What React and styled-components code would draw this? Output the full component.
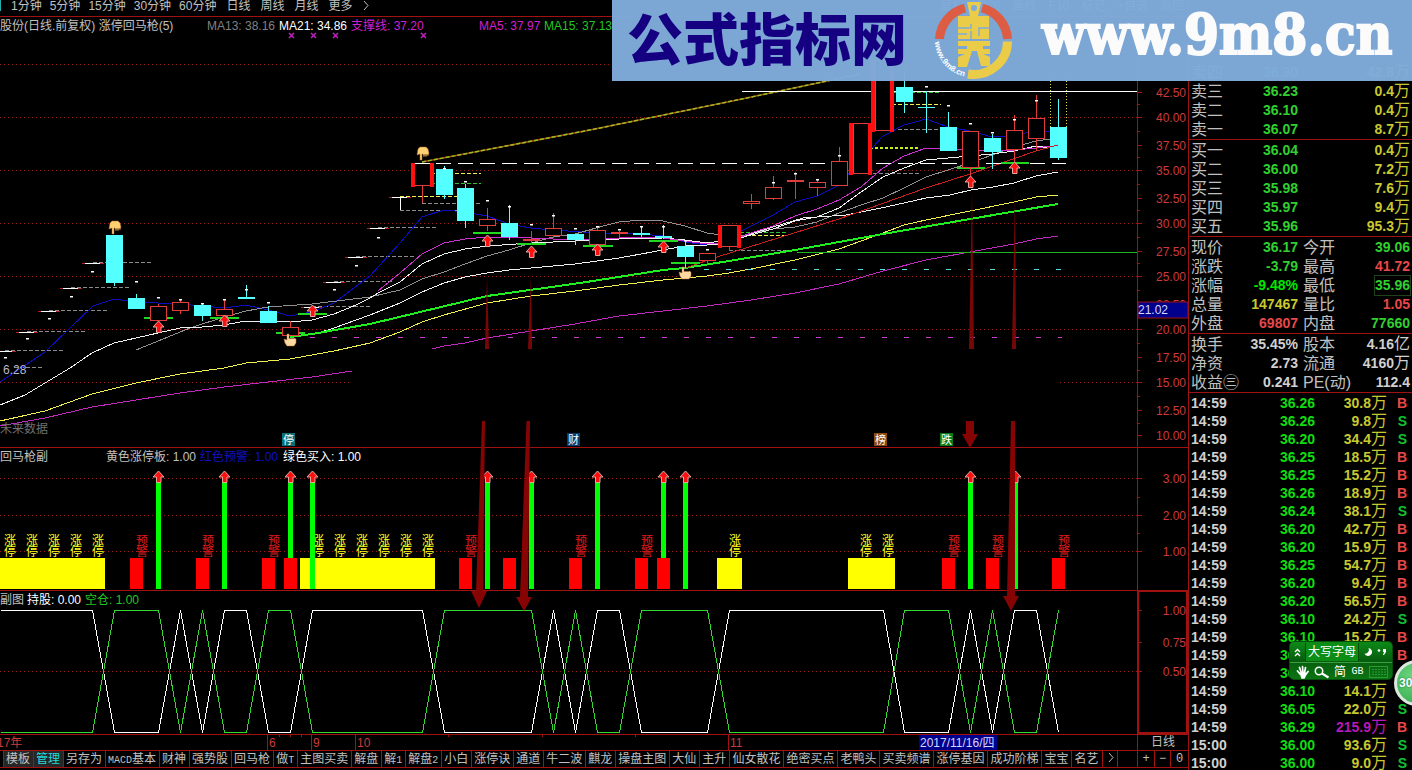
import React from "react";
import styled, { createGlobalStyle } from "styled-components";

const RED_LINE = "#a01212";
const GRID = "#a01818";
const CYAN = "#54ffff";
const SANS = `"Liberation Sans", "Noto Sans CJK SC", sans-serif`;

const GlobalStyle = createGlobalStyle`
  * { box-sizing: border-box; }
  body { margin: 0; background: #000; overflow: hidden; }
  button { font: inherit; color: inherit; background: none; border: 0; padding: 0; margin: 0; white-space: nowrap; }
`;

const Screen = styled.div`
  position: relative;
  display: grid;
  grid-template-columns: minmax(0, 1fr) 224px;
  height: 100vh;
  overflow: hidden;
  background: #000;
  color: #c0c0c0;
  font: 12px/16px ${SANS};
`;
const Main = styled.main`
  position: relative;
  display: flex;
  flex-direction: column;
  min-width: 0;
`;
const PeriodBar = styled.nav`
  display: flex;
  align-items: flex-start;
  gap: 10px;
  height: 17px;
  line-height: 12px;
  border-bottom: 1px solid ${RED_LINE};
  overflow: hidden;
  &::before { content: ""; flex: none; width: 1px; height: 11px; background: #20b0b0; }
`;
const Minutes = styled.div`
  display: flex;
  gap: 8px;
`;
const Tools = styled.div`
  display: flex;
  gap: 12px;
  margin-left: 562px;
`;
const Panel = styled.section`
  display: grid;
  grid-template-columns: minmax(0, 1fr) 51px;
  border-bottom: 1px solid ${RED_LINE};
`;
const Plot = styled.div`
  min-width: 0;
`;
const PlotTitle = styled.header`
  display: flex;
  height: 17px;
  line-height: 19px;
  white-space: nowrap;
`;
const Legend = styled.span`
  flex: none;
  width: ${(p) => p.$w}px;
  color: ${(p) => p.$c || "#c0c0c0"};
`;
const Drawing = styled.svg`
  display: block;
  width: 100%;
  height: ${(p) => p.$h}px;
  overflow: ${(p) => (p.$open ? "visible" : "hidden")};
  font-family: ${SANS};
  font-size: 12px;
`;
const Axis = styled.div`
  border-left: 1px solid ${RED_LINE};
  ${(p) => p.$active && `border: 2px solid ${RED_LINE}; margin-top: -1px;`}
`;
const TimeRow = styled.div`
  display: grid;
  grid-template-columns: minmax(0, 1fr) 51px;
  height: 16px;
  border-bottom: 1px solid ${RED_LINE};
`;
const PeriodCell = styled.div`
  border-left: 1px solid ${RED_LINE};
  text-align: center;
  line-height: 15px;
`;
const TabRow = styled.nav`
  display: flex;
  height: 17px;
  line-height: 16px;
  border-bottom: 1px solid ${RED_LINE};
  overflow: hidden;
`;
const Tab = styled.button`
  flex: none;
  height: 16px;
  line-height: 16px;
  padding: 0 3px 0 2px;
  border-right: 1px solid ${RED_LINE};
  color: ${(p) => (p.$active ? "#20dcdc" : "#c0c0c0")};
  background: ${(p) => (p.$raised ? "#262626" : "transparent")};
`;
const TabEdge = styled.span`
  flex: none;
  width: 4px;
  border-right: 1px solid ${RED_LINE};
`;
const Latin = styled.span`
  font: 10px/16px "Liberation Mono", monospace;
`;
const ZoomKeys = styled.div`
  display: grid;
  grid-template-columns: 16px 16px 1fr;
  flex: none;
  width: 51px;
  margin-left: auto;
  border-left: 1px solid ${RED_LINE};
`;
const ZoomKey = styled.button`
  text-align: center;
  font-family: "Liberation Mono", monospace;
  & + & { border-left: 1px solid ${RED_LINE}; }
`;
const ArrowLayer = styled.svg`
  position: absolute;
  inset: 0;
  width: 100%;
  height: 100%;
  pointer-events: none;
`;

const Side = styled.aside`
  border-left: 1px solid ${RED_LINE};
  padding-top: 62px;
  overflow: hidden;
`;
const Block = styled.div`
  padding: 1px 2px 0;
  border-bottom: 1px solid ${RED_LINE};
`;
const Quote = styled.div`
  display: grid;
  grid-template-columns: 107px 1fr;
  column-gap: 5px;
  height: 19px;
  line-height: 19px;
`;
const Field = styled.div`
  display: flex;
  justify-content: space-between;
  white-space: nowrap;
`;
const Name = styled.span`
  font-size: 16px;
`;
const Num = styled.span`
  margin-left: auto;
  font-size: 14px;
  font-weight: bold;
  color: ${(p) => p.$c};
  outline: ${(p) => (p.$boxed ? "1px solid #204020" : "none")};
`;
const Unit = styled.span`
  font-size: 16px;
  font-weight: normal;
  line-height: 16px;
`;
const Ticks = styled.table`
  width: 221px;
  margin-top: 1px;
  border-collapse: collapse;
  table-layout: fixed;
  font-size: 14px;
  font-weight: bold;
`;
const Cell = styled.td`
  height: 18px;
  padding: 0;
  line-height: 18px;
  text-align: ${(p) => (p.$left ? "left" : "right")};
  padding-left: ${(p) => (p.$left ? 2 : 0)}px;
  padding-right: ${(p) => (p.$end ? 3 : 0)}px;
  color: ${(p) => p.$c};
  white-space: nowrap;
`;

const Banner = styled.a`
  position: absolute;
  top: 0;
  right: 0;
  display: flex;
  align-items: flex-start;
  width: 800px;
  height: 81px;
  padding-left: 15px;
  background: rgba(127, 171, 218, 0.975);
  text-decoration: none;
  white-space: nowrap;
`;
const BannerName = styled.span`
  width: 305px;
  color: #160082;
  font: 900 56px/72px "Noto Sans CJK SC", sans-serif;
`;
const BannerLogo = styled.svg`
  flex: none;
  width: 82px;
  height: 81px;
`;
const BannerUrl = styled.span`
  margin-left: 28px;
  color: #fbfbfb;
  font: bold 56px/68px "DejaVu Serif Condensed", "DejaVu Serif", serif;
  font-stretch: condensed;
  -webkit-text-stroke: 2px #fbfbfb;
`;

const Ime = styled.div`
  position: absolute;
  top: 641px;
  right: 19px;
  display: grid;
  grid-template-rows: 20px 19px;
  width: 104px;
  height: 39px;
  border-radius: 5px;
  border: 1px solid #064f0b;
  background: linear-gradient(#0d8a18, #075d0e 50%, #0a7412);
  color: #fff;
`;
const ImeRow = styled.div`
  display: flex;
  align-items: center;
  & + & { border-top: 1px solid #3c9c40; }
`;
const ImeKey = styled.button`
  flex: none;
  display: flex;
  align-items: center;
  justify-content: center;
  width: ${(p) => p.$w}px;
  height: 18px;
  color: #fff;
  ${(p) => p.$pressed && "background: #0b8d16; border: 1px solid #054a09; border-width: 0 1px;"}
`;
const Ball = styled.button`
  position: absolute;
  top: 660px;
  right: -28px;
  width: 46px;
  height: 46px;
  padding-left: 2px;
  border: 3px solid #dfe8df;
  border-radius: 50%;
  background: radial-gradient(circle at 40% 35%, #6fd883, #2aa545);
  color: #fff;
  font: bold 12px/40px ${SANS};
  text-align: left;
  text-shadow: 0 0 2px #063;
`;

const Line = ({ d, c = "#f0f0f0", w = 1 }) => (
  <polyline points={d} fill="none" stroke={c} strokeWidth={w} shapeRendering="crispEdges" />
);
const Seg = ({ x1, x2, y, c, dash, w = 1 }) => (
  <line x1={x1} x2={x2} y1={y + 0.5} y2={y + 0.5} stroke={c} strokeWidth={w} strokeDasharray={dash} shapeRendering="crispEdges" />
);
const UpArrow = ({ x, y }) => (
  <path
    d={`M${x + 0.5} ${y}l5.5 6h-3v5.500h-4.500v-5.500h-3.500z`}
    fill="#ff1010"
    stroke="#e0a8a0"
    strokeWidth="1"
  />
);

/* x, body top, body bottom, wick top, wick bottom */
const FALLING = [
  [114, 235, 283, 235, 286], [136, 298, 309, 294, 309], [202, 305, 316, 303, 321],
  [246, 297, 299, 285, 299], [268, 311, 323, 306, 323], [444, 169, 195, 166, 199],
  [465, 188, 221, 184, 228], [509, 223, 237, 205, 240], [575, 234, 240, 234, 245],
  [641, 233, 235, 226, 237], [685, 246, 257, 241, 268], [904, 87, 102, 70, 113],
  [926, 107, 108, 91, 133], [948, 127, 151, 112, 151], [992, 138, 152, 134, 169],
  [1058, 127, 158, 99, 160],
];
const RISING = [
  [158, 306, 321, 304, 321], [180, 302, 311, 299, 314], [224, 309, 316, 300, 316],
  [290, 327, 336, 321, 336], [422, 163, 186, 163, 203], [487, 219, 226, 208, 231],
  [531, 239, 241, 231, 245], [553, 228, 236, 213, 238], [597, 230, 245, 226, 245],
  [619, 232, 234, 231, 238], [707, 253, 261, 253, 264], [729, 225, 247, 225, 251],
  [751, 201, 204, 194, 209], [773, 187, 199, 176, 200], [795, 180, 182, 172, 199],
  [817, 182, 188, 180, 196], [839, 161, 186, 147, 186], [861, 123, 174, 123, 174],
  [883, 60, 131, 60, 131], [970, 131, 168, 131, 176], [1014, 130, 150, 115, 162],
  [1036, 118, 139, 95, 151],
];
const LIMIT_BARS = [[411, 163, 186], [718, 225, 247], [849, 123, 174], [871, 60, 131]];
const LIMIT_UPS = [
  [-6, 351, 64], [16, 332, 86], [38, 311, 108], [60, 288, 130], [82, 263, 151],
  [301, 307, 370], [323, 282, 393], [345, 257, 415], [367, 228, 437], [389, 197, 410],
];
const BUY_LINES = [
  [144, 173, 317], [210, 239, 317], [276, 305, 332], [298, 327, 313], [473, 502, 232],
  [517, 546, 243], [583, 613, 245], [649, 678, 240], [671, 700, 262], [957, 985, 167], [1001, 1029, 162],
];
const BUY_ARROWS = [[158, 321], [224, 315], [312, 305], [487, 235], [531, 246], [597, 244], [663, 241], [970, 176], [1014, 162]];
const DOTS = [
  [5, 357], [27, 338], [49, 318], [71, 296], [92, 271], [312, 312], [334, 289], [356, 265], [378, 237], [136, 281],
  [158, 297], [180, 299], [202, 303], [224, 299], [246, 289], [268, 302], [444, 168], [465, 181], [487, 200], [509, 206],
  [531, 224], [553, 215], [575, 228], [597, 226], [619, 229], [641, 226], [663, 226], [685, 240], [707, 249],
  [773, 182], [795, 173], [817, 179], [839, 155], [926, 86], [948, 105], [970, 123], [992, 132], [1014, 119], [1036, 100],
];
const BADGES = [[282, "停", "#0a7078"], [567, "财", "#0a3a6e"], [874, "榜", "#8a4a10"], [940, "跌", "#0a7a14"]];

const HandDown = ({ x, y }) => (
  <path
    transform={`translate(${x} ${y})`}
    d="M-5 1 L-3 -1 H3 L5 1 L6 5 L5 8 L4 6 L3 9 L2 6 L1 9 L0 6 L-1 6 L-1 12 H-3 L-3 6 L-6 7 Z"
    fill="#ffd070"
    stroke="#a86a30"
    strokeWidth="0.5"
  />
);
const HandUp = ({ x, y }) => (
  <path
    transform={`translate(${x} ${y})`}
    d="M-3 0 H-1 V5 L0 4 L1 5 L2 4 L3 5 L4 4 L6 5 V9 L4 12 H-3 L-5 9 L-6 5 L-3 6 Z"
    fill="#ffd9a0"
    stroke="#b87a40"
    strokeWidth="0.5"
  />
);

function PriceChart() {
  return (
    <Drawing $h={413} $open aria-label="K线图">
      <g transform="translate(0 -34)">
        {[291, 313, 335, 423].map((x) => (
          <path key={x} d={`M${x - 2} 33l5 5m0 -5l-5 5`} stroke="#c020c0" strokeWidth="1.5" />
        ))}
        {[64, 117, 170, 223, 276, 329].map((y) => (
          <Seg key={y} x1="0" x2="100%" y={y} c={GRID} dash="1 3" />
        ))}
        <Seg x1="0" x2="352" y={382} c={GRID} dash="1 3" />
        <Seg x1="1060" x2="100%" y={382} c={GRID} dash="1 3" />

        {LIMIT_UPS.map(([x, y, end]) => (
          <g key={x}>
            <Seg x1={x + 11} x2={end} y={y - 1} c="#8c8c8c" dash="4 2" />
            <Seg x1={x} x2={x + 22} y={y} c="#b02020" />
            <Seg x1={x + 3} x2={x + 18} y={y} c="#ffffff" />
          </g>
        ))}
        <Seg x1={14} x2={42} y={367} c="#8c8c8c" dash="4 2" />
        <path d="M400.500 197V210" stroke="#fff" />
        <Seg x1={400} x2={459} y={210} c="#8c8c8c" dash="4 2" />
        <Seg x1={422} x2={481} y={203} c="#8c8c8c" dash="4 2" />
        <Seg x1={400} x2={459} y={196} c="#f0f050" dash="4 2" />
        <Seg x1={431} x2={481} y={173} c="#f0f050" dash="4 2" />
        <Seg x1={431} x2={481} y={183} c="#30c030" dash="4 2" />
        <Seg x1={740} x2={788} y={232} c="#30c030" dash="4 2" />
        <Seg x1={740} x2={784} y={235} c="#f0f050" dash="4 2" />
        <Seg x1={729} x2={788} y={250} c="#8c8c8c" dash="4 2" />
        <Seg x1={870} x2={919} y={147} c="#c0f020" dash="3 2" w={2} />
        <Seg x1={861} x2={919} y={173} c="#8c8c8c" dash="4 2" />
        <Seg x1={893} x2={941} y={92} c="#30c030" dash="4 2" />
        <Seg x1={892} x2={941} y={104} c="#f0f050" dash="4 2" />
        <Seg x1={892} x2={941} y={129} c="#8c8c8c" dash="4 2" />

        <Line c="#0c0cc0" d="0,382 45,352 93,306 114,299 136,302 180,304 202,306 224,308 246,305 268,310 290,316 312,312 334,303 370,276 400,243 422,217 444,210 465,212 487,216 509,224 531,228 553,230 597,233 641,234 663,236 685,242 707,245 729,241 741,231 773,215 795,202 817,196 839,185 861,160 883,136 904,125 926,119 948,127 970,131 992,137 1014,136 1036,130 1058,133" />
        <Line c="#909090" d="136,350 190,328 224,317 246,311 268,307 312,304 370,297 400,290 422,279 444,272 465,264 487,256 509,250 531,243 553,237 575,234 603,226 619,222 641,220 663,221 685,226 707,233 729,236 745,235 773,229 795,227 817,222 839,213 861,205 883,198 904,188 926,177 948,170 970,163 992,155 1014,147 1036,141 1058,138" />
        <Line d="0,405 25,395 50,380 70,368 92,353 114,343 136,338 158,333 180,328 202,327 224,325 246,321 268,321 290,322 312,320 334,314 356,305 370,298 378,293 400,282 422,264 444,254 465,249 487,246 531,243 575,241 619,239 663,238 685,240 707,243 729,240 751,235 773,229 795,221 817,217 839,208 861,192 883,177 904,168 926,160 948,158 970,156 992,154 1014,151 1036,146 1058,149" />
        <Line d="312,335 334,328 370,315 400,303 422,292 444,283 465,277 487,273 509,270 531,268 575,264 619,258 663,250 685,246 707,245 729,243 751,234 773,227 803,218 846,215 886,207 926,198 950,195 971,190 993,187 1014,183 1036,176 1058,172" />
        <Line c="#d030d0" d="378,291 400,273 422,254 444,243 465,239 487,237 531,238 575,240 619,238 641,237 663,238 685,241 707,244 729,242 751,233 773,226 795,216 817,209 839,200 861,187 883,168 904,156 926,148 948,149 970,150 1014,150 1036,148 1058,145" />
        <Line c="#f0f050" d="0,421 45,411 92,394 136,383 180,374 224,368 246,363 290,359 312,355 334,351 370,343 400,332 422,322 444,315 487,303 531,296 575,291 619,285 663,280 685,278 707,276 729,273 751,269 795,260 839,249 883,233 904,225 926,220 970,211 1014,202 1036,197 1058,195" />
        <Line c="#c028c0" d="0,426 45,418 92,407 136,400 180,393 224,387 268,382 312,377 352,371" />
        <Line c="#c028c0" d="432,349 444,346 465,343 487,338 531,331 575,324 619,316 663,311 707,306 729,303 751,300 795,293 839,284 883,271 926,260 970,252 1014,244 1036,239 1058,236" />
        <Line c="#20ee20" w={2} d="290,337 312,334 370,324 487,296 580,283 663,270 685,268 729,261 795,250 883,234 970,219 1058,204" />
        <Line c="#c81e1e" d="685,268 717,257 839,219 926,188 970,174 1036,151 1058,145" />
        <polyline points="422,162 590,130 742,99 860,74" fill="none" stroke="#a84a10" strokeWidth="1.5" />
        <polyline points="422,162 590,130 742,99 860,74" fill="none" stroke="#98c020" strokeWidth="1.5" strokeDasharray="4 2" />
        <Seg x1={414} x2={1066} y={163} c="#fff" dash="15 7" />
        <Seg x1={742} x2="100%" y={91} c="#fff" />
        <Seg x1={797} x2="100%" y={252} c="#20b820" />
        <Seg x1={704} x2={1062} y={269} c="#50e0e0" dash="5 17" />
        <Seg x1={310} x2={1062} y={337} c="#d040d0" dash="5 17" />
        <path d="M1050.500 75V127M1066.500 75V127" stroke="#e0e040" strokeDasharray="1 2" />

        {BUY_LINES.map(([a, b, y]) => (
          <Seg key={a} x1={a} x2={b} y={y} c="#20d820" w={2} />
        ))}
        {RISING.map(([x, t, b, wt, wb]) => (
          <g key={x} shapeRendering="crispEdges">
            <path d={`M${x + 0.5} ${wt}V${t}M${x + 0.5} ${b}V${wb}`} stroke="#e03c3c" />
            <rect x={x - 7.5} y={t + 0.5} width="16" height={b - t - 1} fill={b - t < 3 ? "#e03c3c" : "#000"} stroke="#e03c3c" />
          </g>
        ))}
        {LIMIT_BARS.map(([x, t, b]) => (
          <path key={x} d={`M${x + 2} ${t}V${b + 1}M${x + 21} ${t}V${b + 1}`} stroke="#ff1010" strokeWidth="4" shapeRendering="crispEdges" />
        ))}
        <Seg x1={415} x2={430} y={163} c="#fff" />
        {FALLING.map(([x, t, b, wt, wb]) => (
          <g key={x} fill={CYAN} shapeRendering="crispEdges">
            <rect x={x - 8} y={t} width="17" height={b - t} />
            <rect x={x} y={wt} width="1" height={wb - wt} />
          </g>
        ))}
        <Seg x1={655} x2={672} y={236} c={CYAN} w={2} />
        <path d="M663.500 225V239" stroke={CYAN} />
        <Line c="#c81e1e" d="1045,149 1050,147 1058,145" />
        {DOTS.map(([x, y]) => (
          <rect key={x} x={x - 1} y={y} width="3" height="1.500" fill="#fff" />
        ))}
        {BUY_ARROWS.map(([x, y]) => (
          <UpArrow key={x} x={x} y={y} />
        ))}
        <HandDown x={115} y={222} />
        <HandDown x={423} y={148} />
        <HandUp x={290} y={334} />
        <HandUp x={685} y={267} />

        <g fill="#8c0808" fillOpacity="0.85">
          <path d="M487 275L489 349H485Z" />
          <path d="M531 275L532 349H528Z" />
          <path d="M972 190L974 349H969Z" />
          <path d="M1015 190L1016 349H1012Z" />
        </g>
        <text x="3" y="374" fill="#b8b8c8">6.28</text>
        <text x="0" y="433" fill="#707070">未来数据</text>
        {BADGES.map(([x, t, c]) => (
          <g key={x}>
            <rect x={x} y="433" width="13" height="13" fill={c} />
            <text x={x + 1} y="444" fill="#fff" fontSize="11">{t}</text>
          </g>
        ))}
      </g>
    </Drawing>
  );
}

const BUY_BARS = [158, 224, 290, 312, 487, 531, 597, 663, 685, 970, 1015];
const YELLOW = [[0, 105], [300, 135], [717, 25], [848, 47]];
const REDS = [130, 196, 262, 284, 459, 503, 569, 635, 657, 942, 986, 1052];
const UP_TAGS = [10, 32, 54, 76, 98, 318, 340, 362, 384, 406, 428, 735, 866, 888];
const WARN_TAGS = [142, 208, 274, 471, 581, 647, 954, 998, 1064];

function SignalChart() {
  return (
    <Drawing $h={125}>
      <g transform="translate(0 -465)">
        {[478, 515, 551].map((y) => (
          <Seg key={y} x1="0" x2="100%" y={y} c={GRID} dash="1 3" />
        ))}
        <g fontSize="12" textAnchor="middle">
          {UP_TAGS.map((x) => (
            <g key={x} fill="#ffff20">
              <text x={x} y="545">涨</text>
              <text x={x} y="556">停</text>
            </g>
          ))}
          {WARN_TAGS.map((x) => (
            <g key={x} fill="#e01c1c">
              <text x={x} y="545">预</text>
              <text x={x} y="556">警</text>
            </g>
          ))}
        </g>
        {YELLOW.map(([x, w]) => (
          <rect key={x} x={x} y="558" width={w} height="31" fill="#ffff00" />
        ))}
        {BUY_BARS.map((x) => (
          <rect key={x} x={x - 2} y="481" width="5" height="108" fill="#00ff00" />
        ))}
        {REDS.map((x) => (
          <rect key={x} x={x} y="558" width="13" height="31" fill="#ff0000" />
        ))}
        {BUY_BARS.map((x) => (
          <UpArrow key={x} x={x} y={471} />
        ))}
      </g>
    </Drawing>
  );
}

const HOLD = [
  [0, 1], [92, 1], [114, 0], [158, 0], [180, 1], [202, 0], [224, 1], [246, 1], [268, 0], [290, 0], [312, 1], [422, 1],
  [444, 0], [531, 0], [553, 1], [575, 0], [597, 1], [619, 1], [641, 0], [707, 0], [729, 1], [883, 1], [904, 0], [948, 0],
  [970, 1], [992, 0], [1014, 1], [1036, 1], [1058, 0],
];
const wave = (flip) => HOLD.map(([x, v]) => `${x + 0.5},${(flip ? !v : v) ? 610.5 : 732.5}`).join(" ");

function PositionChart() {
  return (
    <Drawing $h={126}>
      <g transform="translate(0 -608)">
        <Seg x1="0" x2="100%" y={671} c={GRID} dash="1 3" />
        <Line c="#ffffff" d={wave(false)} />
        <Line c="#30d830" d={wave(true)} />
      </g>
    </Drawing>
  );
}

function Scale({ top, height, left = 1138, marks, minor = [], children }) {
  return (
    <Drawing $h={height}>
      <g transform={`translate(${-left} ${-top})`}>
        {marks.map(([t, y]) => (
          <Seg key={t} x1={1138} x2={1142} y={y} c={RED_LINE} />
        ))}
        {minor.map((y) => (
          <Seg key={y} x1={1138} x2={1140} y={y} c={RED_LINE} />
        ))}
        <g fill="#cc3a3a" textAnchor="end">
          {marks.map(([t, y]) => (
            <text key={t} x="1186" y={y + 5}>{t}</text>
          ))}
        </g>
        {children}
      </g>
    </Drawing>
  );
}

const PRICE_MARKS = [
  ["42.50", 92], ["40.00", 117], ["37.50", 145], ["35.00", 170], ["32.50", 198], ["30.00", 223], ["27.50", 251],
  ["25.00", 276], ["22.50", 304], ["20.00", 329], ["17.50", 357], ["15.00", 382], ["12.50", 410], ["10.00", 435],
];

function TimeAxis() {
  return (
    <Drawing $h={15}>
      <g fill="#cc3a3a">
        <text x="-3" y="12">17年</text>
        {[[267, "6"], [311, "9"], [355, "10"], [728, "11"]].map(([x, t]) => (
          <g key={x}>
            <rect x={x} y="0" width="1" height="15" fill={RED_LINE} />
            <text x={x + 2} y="12">{t}</text>
          </g>
        ))}
        {[542, 635, 448, 279, 290, 301].map((x) => (
          <rect key={x} x={x} y="0" width="1" height="2" fill={RED_LINE} />
        ))}
      </g>
      <rect x="919" y="0" width="78" height="15" fill="#00008c" />
      <text x="920" y="12" fill="#d8d8ff">2017/11/16/四</text>
    </Drawing>
  );
}

const MINUTES = ["1分钟", "5分钟", "15分钟", "30分钟", "60分钟"];
const PERIODS = ["日线", "周线", "月线", "更多"];
const TOOLS = ["复权", "叠加", "画线", "F10", "标记", "+自选", "返回"];
const TABS = [
  ["模板"], ["管理"], ["另存为"], ["MACD", "基本"], ["财神"], ["强势股"], ["回马枪"], ["做", "T"], ["主图买卖"], ["解盘"],
  ["解", "1"], ["解盘", "2"], ["小白"], ["涨停诀"], ["通道"], ["牛二波"], ["麒龙"], ["操盘主图"], ["大仙"], ["主升"],
  ["仙女散花"], ["绝密买点"], ["老鸭头"], ["买卖频谱"], ["涨停基因"], ["成功阶梯"], ["宝宝"], ["名艺"],
];

const G = "#30d030", R = "#e84848", Y = "#c8c830", W = "#d0d0d0", M = "#b818b8";
const SELLS = [["卖四", "36.30", "42.8"], ["卖三", "36.23", "0.4"], ["卖二", "36.10", "0.4"], ["卖一", "36.07", "8.7"]];
const BUYS = [["买一", "36.04", "0.4"], ["买二", "36.00", "7.2"], ["买三", "35.98", "7.6"], ["买四", "35.97", "9.4"], ["买五", "35.96", "95.3"]];
const STATS = [
  ["现价", "36.17", G, "今开", "39.06", G],
  ["涨跌", "-3.79", G, "最高", "41.72", R],
  ["涨幅", "-9.48%", "#00e800", "最低", "35.96", G, true],
  ["总量", "147467", Y, "量比", "1.05", R],
  ["外盘", "69807", R, "内盘", "77660", G],
];
const BASICS = [
  ["换手", "35.45%", "股本", "4.16", "亿"],
  ["净资", "2.73", "流通", "4160", "万"],
  ["收益㊂", "0.241", "PE(动)", "112.4", ""],
];
const TRADES = `36.26 30.8 B|36.26 9.8 S|36.20 34.4 S|36.25 18.5 B|36.25 15.2 B|36.26 18.9 B|36.24 38.1 S|36.20 42.7 B|36.20 15.9 B|36.25 54.7 B|36.20 9.4 B|36.20 56.5 B|36.10 24.2 S|36.10 15.2 B|36.10 12.6 B|36.10 10.3 S|36.10 14.1 S|36.05 22.0 S|36.29 215.9 B|36.00 93.6 S|36.00 9.0 S`
  .split("|")
  .map((r) => r.split(" "));

const Depth = ({ rows }) => (
  <Block>
    {rows.map(([n, p, v]) => (
      <Quote key={n}>
        <Field><Name>{n}</Name><Num $c={G}>{p}</Num></Field>
        <Field><Num $c={Y}>{v}<Unit>万</Unit></Num></Field>
      </Quote>
    ))}
  </Block>
);

function QuotePanel() {
  return (
    <Side>
      <Depth rows={SELLS} />
      <Depth rows={BUYS} />
      <Block>
        {STATS.map(([a, b, c, d, e, f, boxed]) => (
          <Quote key={a}>
            <Field><Name>{a}</Name><Num $c={c}>{b}</Num></Field>
            <Field><Name>{d}</Name><Num $c={f} $boxed={boxed}>{e}</Num></Field>
          </Quote>
        ))}
      </Block>
      <Block>
        {BASICS.map(([a, b, c, d, u]) => (
          <Quote key={a}>
            <Field><Name>{a}</Name><Num $c={W}>{b}</Num></Field>
            <Field><Name>{c}</Name><Num $c={W}>{d}{u && <Unit>{u}</Unit>}</Num></Field>
          </Quote>
        ))}
      </Block>
      <Ticks>
        <colgroup>
          <col width="56" /><col width="70" /><col width="72" /><col width="23" />
        </colgroup>
        <tbody>
          {TRADES.map(([p, v, f], i) => (
            <tr key={i}>
              <Cell $left $c={W}>{i < 19 ? "14:59" : "15:00"}</Cell>
              <Cell $c="#10dc10">{p}</Cell>
              <Cell $c={v === "215.9" ? M : Y}>{v}<Unit>万</Unit></Cell>
              <Cell $end $c={f === "B" ? R : "#10c030"}>{f}</Cell>
            </tr>
          ))}
        </tbody>
      </Ticks>
    </Side>
  );
}

function SiteBanner() {
  return (
    <Banner href="#site">
      <BannerName>公式指标网</BannerName>
      <BannerLogo viewBox="931 0 82 81" aria-hidden="true">
        <g fill="none" strokeWidth="9">
          <path d="M938.500 39A34 34 0 0 1 964 8" stroke="#dc5c44" />
          <path d="M981 8A34 34 0 0 1 1006.500 39" stroke="#dc5c44" />
          <path d="M1006.500 41.500A34 33 0 0 1 967 74" stroke="#ebcc48" />
        </g>
        <path d="M966 2H980L977 16H988V39H957V16H969Z" fill="#ebcc48" />
        <circle cx="973" cy="8" r="3" fill="#7fabda" />
        <path d="M957 41H989V46H982V49H989V54H982L989 57V66H980L976 51H971L966 67H957V57L964 54H957V49H966V46H957Z" fill="#ebcc48" />
        <path d="M957 28H970V24M988 28H978V36M957 34H966M970 31V39" stroke="#7fabda" strokeWidth="1.500" fill="none" />
        <path id="ringText" d="M934 42A38 38 0 0 0 966 77" fill="none" />
        <text fontFamily="Liberation Sans, sans-serif" fontWeight="bold" fontSize="8" fill="#fff">
          <textPath href="#ringText">www.9m8.cn</textPath>
        </text>
      </BannerLogo>
      <BannerUrl>www.9m8.cn</BannerUrl>
    </Banner>
  );
}

function ImeBar() {
  return (
    <Ime>
      <ImeRow>
        <ImeKey $w={15} aria-label="展开">
          <svg width="7" height="9" fill="none" stroke="#fff" strokeWidth="1.300"><path d="M1 4l2.500-2.500L6 4M1 8l2.500-2.500L6 8" /></svg>
        </ImeKey>
        <ImeKey $w={54} $pressed>大写字母</ImeKey>
        <ImeKey $w={18} aria-label="半角">
          <svg width="8" height="8" viewBox="0 0 9 9" fill="#fff"><path d="M5 0a4.500 4.500 0 1 1-4.500 6.500A4.500 4.500 0 0 0 5 0z" /></svg>
        </ImeKey>
        <ImeKey $w={10} aria-label="标点">
          <svg width="10" height="8" fill="#fff"><circle cx="2" cy="2.500" r="1.300" /><path d="M6 1h3v3l-2 3h-1l1-3h-1z" /></svg>
        </ImeKey>
      </ImeRow>
      <ImeRow>
        <ImeKey $w={24} aria-label="手写">
          <svg width="13" height="14" viewBox="0 0 13 14" fill="none" stroke="#fff" strokeWidth="1.700" strokeLinecap="round">
            <path d="M1.500 6L4 9M3.500 2.500L5.500 8M6.500 1.500L7 8M9.500 2.500L8.500 8M12 6.500L9.500 10" />
            <path d="M4.500 8H9L9 11L8 13H6Z" fill="#fff" />
          </svg>
        </ImeKey>
        <ImeKey $w={16} aria-label="搜索">
          <svg width="16" height="13" fill="none" stroke="#fff"><circle cx="5" cy="5" r="3.700" strokeWidth="1.500" /><path d="M8 7.500l6.500 4" strokeWidth="2.200" /></svg>
        </ImeKey>
        <ImeKey $w={20}>简</ImeKey>
        <ImeKey $w={15}><Latin>GB</Latin></ImeKey>
        <ImeKey $w={26} aria-label="键盘">
          <svg width="19" height="12" fill="none" stroke="#2a9a34"><rect x="0.500" y="0.500" width="18" height="11" /><path d="M3 3.500H17M3 6H17M3 8.500H17" strokeDasharray="2 1" /></svg>
        </ImeKey>
      </ImeRow>
    </Ime>
  );
}

export default function App() {
  return (
    <Screen>
      <GlobalStyle />
      <Main>
        <PeriodBar>
          <Minutes>
            {MINUTES.map((p) => (
              <button key={p}>{p}</button>
            ))}
          </Minutes>
          {PERIODS.map((p) => (
            <button key={p}>{p}</button>
          ))}
          <button aria-label="展开周期">
            <svg width="6" height="11" fill="none" stroke="#c0c0c0"><path d="M1 1l4 4.500-4 4.500" /></svg>
          </button>
          <Tools>
            {TOOLS.map((t) => (
              <button key={t}>{t}</button>
            ))}
          </Tools>
        </PeriodBar>

        <Panel>
          <Plot>
            <PlotTitle>
              <Legend $w={207}>股份(日线.前复权) 涨停回马枪(5)</Legend>
              <Legend $w={72} $c="#808080">MA13: 38.16</Legend>
              <Legend $w={72} $c="#ffffff">MA21: 34.86</Legend>
              <Legend $w={128} $c="#d020d0">支撑线: 37.20</Legend>
              <Legend $w={65} $c="#d020d0">MA5: 37.97</Legend>
              <Legend $w={72} $c="#20c820">MA15: 37.13</Legend>
            </PlotTitle>
            <PriceChart />
          </Plot>
          <Axis>
            <Scale top={17} height={430} marks={PRICE_MARKS} minor={[104, 131, 157, 184, 210, 237, 263, 290, 343, 370, 396, 423]}>
              <rect x="1138" y="302" width="50" height="16" fill="#00008c" stroke={RED_LINE} />
              <text x="1138" y="314" fill="#d8d8ff">21.02</text>
            </Scale>
          </Axis>
        </Panel>

        <Panel>
          <Plot>
            <PlotTitle>
              <Legend $w={106}>回马枪副</Legend>
              <Legend $w={94}>黄色涨停板: 1.00</Legend>
              <Legend $w={83} $c="#1010c0">红色预警: 1.00</Legend>
              <Legend $w={90} $c="#ffffff">绿色买入: 1.00</Legend>
            </PlotTitle>
            <SignalChart />
          </Plot>
          <Axis>
            <Scale top={448} height={142} marks={[["3.00", 478], ["2.00", 515], ["1.00", 551]]} minor={[497, 533]} />
          </Axis>
        </Panel>

        <Panel>
          <Plot>
            <PlotTitle>
              <Legend $w={27}>副图</Legend>
              <Legend $w={58} $c="#ffffff">持股: 0.00</Legend>
              <Legend $w={70} $c="#20c820">空仓: 1.00</Legend>
            </PlotTitle>
            <PositionChart />
          </Plot>
          <Axis $active>
            <Scale top={592} left={1139} height={140} marks={[["1.00", 610], ["0.75", 642], ["0.50", 671]]} />
          </Axis>
        </Panel>

        <TimeRow>
          <TimeAxis />
          <PeriodCell>日线</PeriodCell>
        </TimeRow>

        <TabRow>
          <TabEdge />
          {TABS.map((parts, i) => (
            <Tab key={i} $active={i === 1} $raised={i < 2}>
              {parts.map((t) => (/^[A-Z0-9]+$/.test(t) ? <Latin key={t}>{t}</Latin> : t))}
            </Tab>
          ))}
          <Tab aria-label="更多模板">
            <svg width="9" height="11" fill="none" stroke="#c0c0c0"><path d="M4 1l4 4.500-4 4.500" /></svg>
          </Tab>
          <ZoomKeys>
            <ZoomKey>+</ZoomKey>
            <ZoomKey>−</ZoomKey>
            <ZoomKey>0</ZoomKey>
          </ZoomKeys>
        </TabRow>

        <ArrowLayer aria-hidden="true">
          <g fill="#860404">
            <path d="M482 421H485L483 591H487L479 608L471 591H476Z" />
            <path d="M526.500 421H530L528 597H532L524 611L516 597H520Z" />
            <path d="M966 421H974V434H978L970 448L962 434H966Z" />
            <path d="M1011 421H1015L1015 596H1019L1011 611L1003 596H1007Z" />
          </g>
        </ArrowLayer>
      </Main>
      <QuotePanel />
      <SiteBanner />
      <ImeBar />
      <Ball>30</Ball>
    </Screen>
  );
}
